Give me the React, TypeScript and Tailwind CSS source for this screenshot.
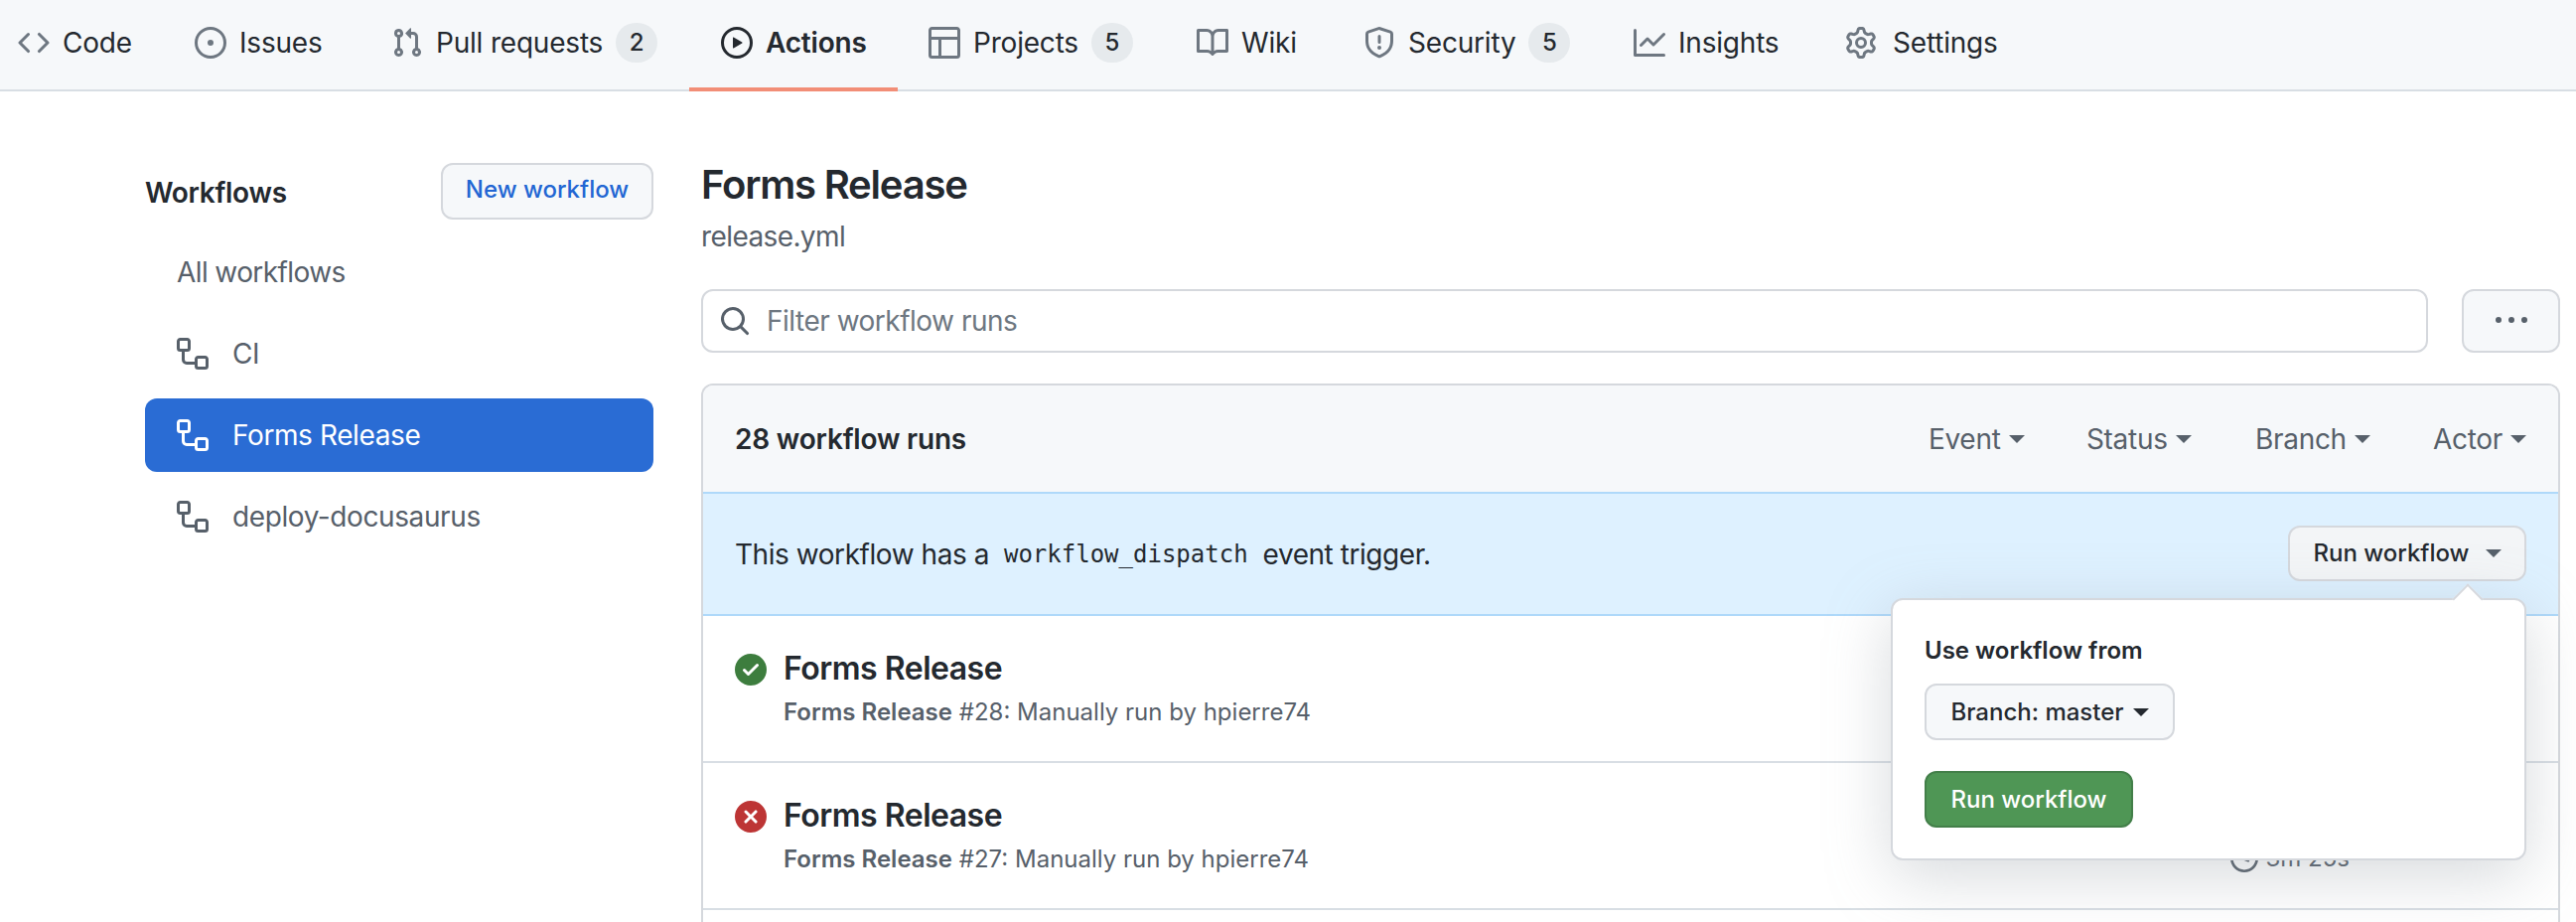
const P = {
  code: 'M4.72 3.22a.75.75 0 011.06 1.06L2.06 8l3.72 3.72a.75.75 0 11-1.06 1.06L.47 8.53a.75.75 0 010-1.06l4.25-4.25zm6.56 0a.75.75 0 10-1.06 1.06L13.94 8l-3.72 3.72a.75.75 0 101.06 1.06l4.25-4.25a.75.75 0 000-1.06l-4.25-4.25z',
  issue: 'M8 9.5a1.5 1.5 0 100-3 1.5 1.5 0 000 3zM8 0a8 8 0 100 16A8 8 0 008 0zM1.5 8a6.5 6.5 0 1113 0 6.5 6.5 0 01-13 0z',
  pull: 'M7.177 3.073L9.573.677A.25.25 0 0110 .854v4.792a.25.25 0 01-.427.177L7.177 3.427a.25.25 0 010-.354zM3.75 2.5a.75.75 0 100 1.5.75.75 0 000-1.5zm-2.25.75a2.25 2.25 0 113 2.122v5.256a2.251 2.251 0 11-1.5 0V5.372A2.25 2.25 0 011.5 3.25zM11 2.5h-1V4h1a1 1 0 011 1v5.628a2.251 2.251 0 101.5 0V5A2.5 2.5 0 0011 2.5zm1 10.25a.75.75 0 111.5 0 .75.75 0 01-1.5 0zM3.75 12a.75.75 0 100 1.5.75.75 0 000-1.5z',
  play: 'M1.5 8a6.5 6.5 0 1113 0 6.5 6.5 0 01-13 0zM8 0a8 8 0 100 16A8 8 0 008 0zM6.379 5.227A.25.25 0 006 5.442v5.117a.25.25 0 00.379.214l4.264-2.559a.25.25 0 000-.428L6.379 5.227z',
  table: 'M0 1.75C0 .784.784 0 1.75 0h12.5C15.216 0 16 .784 16 1.75v12.5A1.75 1.75 0 0114.25 16H1.75A1.75 1.75 0 010 14.25V1.75zM1.5 6.5v7.75c0 .138.112.25.25.25H5v-8H1.5zm5 8h7.75a.25.25 0 00.25-.25V6.5h-8v8zm-5-9.5h13V1.75a.25.25 0 00-.25-.25H1.75a.25.25 0 00-.25.25V5z',
  book: 'M0 1.75A.75.75 0 01.75 1h4.253c1.227 0 2.317.59 3 1.501A3.744 3.744 0 0111.006 1h4.245a.75.75 0 01.75.75v10.5a.75.75 0 01-.75.75h-4.507a2.25 2.25 0 00-1.591.659l-.622.621a.75.75 0 01-1.06 0l-.622-.621A2.25 2.25 0 005.258 13H.75a.75.75 0 01-.75-.75V1.75zm8.755 3a2.25 2.25 0 012.25-2.25H14.5v9h-3.757c-.71 0-1.4.201-1.992.572l.004-7.322zm-1.504 7.324l.004-5.073-.002-2.253A2.25 2.25 0 005.003 2.5H1.5v9h3.757a3.75 3.75 0 011.994.574z',
  shield: 'M7.467.133a1.75 1.75 0 011.066 0l5.25 1.68A1.75 1.75 0 0115 3.48V7c0 1.566-.32 3.182-1.303 4.682-.983 1.498-2.585 2.813-5.032 3.855a1.7 1.7 0 01-1.33 0c-2.447-1.042-4.049-2.357-5.032-3.855C1.32 10.182 1 8.566 1 7V3.48a1.75 1.75 0 011.217-1.667l5.25-1.68zm.61 1.429a.25.25 0 00-.153 0l-5.25 1.68a.25.25 0 00-.174.238V7c0 1.358.275 2.666 1.057 3.86.784 1.194 2.121 2.34 4.366 3.297a.2.2 0 00.154 0c2.245-.956 3.582-2.104 4.366-3.298C13.225 9.666 13.5 8.36 13.5 7V3.48a.25.25 0 00-.174-.237l-5.25-1.68zM9 10.5a1 1 0 11-2 0 1 1 0 012 0zm-.25-5.75a.75.75 0 10-1.5 0v3a.75.75 0 001.5 0v-3z',
  graph: 'M1.5 1.75a.75.75 0 00-1.5 0v12.5c0 .414.336.75.75.75h14.5a.75.75 0 000-1.5H1.5V1.75zm14.28 2.53a.75.75 0 00-1.06-1.06L10 7.94 7.53 5.47a.75.75 0 00-1.06 0L3.22 8.72a.75.75 0 001.06 1.06L7 7.06l2.47 2.47a.75.75 0 001.06 0l5.25-5.25z',
  gear: 'M7.429 1.525a6.593 6.593 0 011.142 0c.036.003.108.036.137.146l.289 1.105c.147.56.55.967.997 1.189.174.086.341.183.501.29.417.278.97.423 1.53.27l1.102-.303c.11-.03.175.016.195.046.219.31.41.641.573.989.014.031.022.11-.059.19l-.815.806c-.411.406-.562.957-.53 1.456a4.588 4.588 0 010 .582c-.032.499.119 1.05.53 1.456l.815.806c.08.08.073.159.059.19a6.494 6.494 0 01-.573.99c-.02.029-.086.074-.195.045l-1.103-.303c-.559-.153-1.112-.008-1.529.27-.16.107-.327.204-.5.29-.449.222-.851.628-.998 1.189l-.289 1.105c-.029.11-.101.143-.137.146a6.613 6.613 0 01-1.142 0c-.036-.003-.108-.037-.137-.146l-.289-1.105c-.147-.56-.55-.967-.997-1.189a4.502 4.502 0 01-.501-.29c-.417-.278-.97-.423-1.53-.27l-1.102.303c-.11.03-.175-.016-.195-.046a6.492 6.492 0 01-.573-.989c-.014-.031-.022-.11.059-.19l.815-.806c.411-.406.562-.957.53-1.456a4.587 4.587 0 010-.582c.032-.499-.119-1.05-.53-1.456l-.815-.806c-.08-.08-.073-.159-.059-.19a6.44 6.44 0 01.573-.99c.02-.029.086-.075.195-.045l1.103.303c.559.153 1.112.008 1.529-.27.16-.107.327-.204.5-.29.449-.222.851-.628.998-1.189l.289-1.105c.029-.11.101-.143.137-.146zM8 0c-.236 0-.47.01-.701.03-.743.065-1.29.615-1.458 1.261l-.29 1.106c-.017.066-.078.158-.211.224a5.994 5.994 0 00-.668.386c-.123.082-.233.09-.3.071L3.27 2.776c-.644-.177-1.392.02-1.82.63a7.977 7.977 0 00-.704 1.217c-.315.675-.111 1.422.363 1.891l.815.806c.05.048.098.147.088.294a6.084 6.084 0 000 .772c.01.147-.038.246-.088.294l-.815.806c-.474.469-.678 1.216-.363 1.891.2.428.436.835.704 1.218.428.609 1.176.806 1.82.63l1.103-.303c.066-.019.176-.011.299.071.213.143.436.272.668.386.133.066.194.158.212.224l.289 1.106c.169.646.715 1.196 1.458 1.26a8.094 8.094 0 001.402 0c.743-.064 1.29-.614 1.458-1.26l.29-1.106c.017-.066.078-.158.211-.224a5.98 5.98 0 00.668-.386c.123-.082.233-.09.3-.071l1.102.302c.644.177 1.392-.02 1.82-.63.268-.382.505-.789.704-1.217.315-.675.111-1.422-.364-1.891l-.814-.806c-.05-.048-.098-.147-.088-.294a6.1 6.1 0 000-.772c-.01-.147.039-.246.088-.294l.814-.806c.475-.469.679-1.216.364-1.891a7.992 7.992 0 00-.704-1.218c-.428-.609-1.176-.806-1.82-.63l-1.103.303c-.066.019-.176.011-.299-.071a5.991 5.991 0 00-.668-.386c-.133-.066-.194-.158-.212-.224L10.16 1.29C9.99.645 9.444.095 8.701.031A8.094 8.094 0 008 0zm1.5 8a1.5 1.5 0 11-3 0 1.5 1.5 0 013 0zM11 8a3 3 0 11-6 0 3 3 0 016 0z',
  workflow: 'M0 1.75C0 .784.784 0 1.75 0h3.5C6.216 0 7 .784 7 1.75v3.5A1.75 1.75 0 015.25 7H4v4a1 1 0 001 1h4v-1.25C9 9.784 9.784 9 10.75 9h3.5c.966 0 1.75.784 1.75 1.75v3.5A1.75 1.75 0 0114.25 16h-3.5A1.75 1.75 0 019 14.25V13.5H5A2.5 2.5 0 012.5 11V7h-.75A1.75 1.75 0 010 5.25v-3.5zm1.75-.25a.25.25 0 00-.25.25v3.5c0 .138.112.25.25.25h3.5a.25.25 0 00.25-.25v-3.5a.25.25 0 00-.25-.25h-3.5zm9 9a.25.25 0 00-.25.25v3.5c0 .138.112.25.25.25h3.5a.25.25 0 00.25-.25v-3.5a.25.25 0 00-.25-.25h-3.5z',
  search: 'M11.5 7a4.499 4.499 0 11-8.998 0A4.499 4.499 0 0111.5 7zm-.82 4.74a6 6 0 111.06-1.06l3.04 3.04a.75.75 0 11-1.06 1.06l-3.04-3.04z',
  kebab: 'M8 9a1.5 1.5 0 100-3 1.5 1.5 0 000 3zM1.5 9a1.5 1.5 0 100-3 1.5 1.5 0 000 3zm13 0a1.5 1.5 0 100-3 1.5 1.5 0 000 3z',
  check: 'M8 16A8 8 0 108 0a8 8 0 000 16zm3.78-9.72a.75.75 0 00-1.06-1.06L6.75 9.19 5.28 7.72a.75.75 0 00-1.06 1.06l2 2a.75.75 0 001.06 0l4.5-4.5z',
  cross: 'M2.343 13.657A8 8 0 1113.657 2.343 8 8 0 012.343 13.657zM6.03 4.97a.75.75 0 00-1.06 1.06L6.94 8 4.97 9.97a.75.75 0 101.06 1.06L8 9.06l1.97 1.97a.75.75 0 101.06-1.06L9.06 8l1.97-1.97a.75.75 0 10-1.06-1.06L8 6.94 6.03 4.97z',
  clock: 'M1.5 8a6.5 6.5 0 1113 0 6.5 6.5 0 01-13 0zM8 0a8 8 0 100 16A8 8 0 008 0zm.5 4.75a.75.75 0 00-1.5 0v3.5a.75.75 0 00.471.696l2.5 1a.75.75 0 00.557-1.392L8.5 7.742V4.75z',
};

function Octicon({ d, className }: { d: string; className: string }) {
  return (
    <svg viewBox="0 0 16 16" fill="currentColor" fillRule="evenodd" className={`shrink-0 ${className}`}>
      <path d={d} />
    </svg>
  );
}

function Caret({ className = 'text-[#57606a]' }: { className?: string }) {
  return <span className={`inline-block w-0 h-0 border-x-[8px] border-x-transparent border-t-[8px] border-t-current ${className}`} />;
}

const tabs = [
  { label: 'Code', icon: P.code, cls: 'ml-[18px] w-[178px]' },
  { label: 'Issues', icon: P.issue, cls: 'w-[198px]' },
  { label: 'Pull requests', icon: P.pull, count: '2', cls: 'w-[300px]' },
  { label: 'Actions', icon: P.play, active: true, cls: 'w-[210px]' },
  { label: 'Projects', icon: P.table, count: '5', cls: 'w-[270px] ml-[31px]' },
  { label: 'Wiki', icon: P.book, cls: 'w-[168px]' },
  { label: 'Security', icon: P.shield, count: '5', cls: 'w-[272px]' },
  { label: 'Insights', icon: P.graph, cls: 'w-[213px]' },
  { label: 'Settings', icon: P.gear, cls: 'gap-[16px]' },
];

function TabBar() {
  return (
    <nav className="h-[92px] bg-[#f6f8fa] border-b-2 border-[#d8dee4] flex items-start">
      {tabs.map((t) => (
        <div
          key={t.label}
          className={`h-[92px] flex items-center gap-[13px] ${t.cls} ${
            t.active ? 'border-b-[4px] border-[#f28e77] pl-[32px] pb-[3px] font-semibold' : 'pb-[7px]'
          }`}
        >
          <Octicon d={t.icon} className={`w-[32px] h-[32px] ${t.active ? 'text-[#24292f]' : 'text-[#6e7781]'}`} />
          <span className="text-[28px] tracking-[-0.2px] text-[#24292f] leading-none">{t.label}</span>
          {t.count && (
            <span className="w-[42px] h-[40px] rounded-full bg-[#e6eaed] flex items-center justify-center text-[24px] font-medium text-[#24292f]">
              {t.count}
            </span>
          )}
        </div>
      ))}
    </nav>
  );
}

function Sidebar() {
  const items = [
    { label: 'CI' },
    { label: 'Forms Release', active: true },
    { label: 'deploy-docusaurus' },
  ];
  return (
    <aside className="w-[512px] shrink-0 ml-[146px] mt-[72px]">
      <div className="flex items-center justify-between h-[56px]">
        <h2 className="text-[28px] tracking-[-0.3px] font-semibold text-[#24292f] mt-[3px]">Workflows</h2>
        <button className="w-[214px] h-[57px] rounded-[12px] border-2 border-[#d5d8dd] bg-[#f6f8fa] text-[24px] font-medium text-[#2266d3] pb-[2px]">
          New workflow
        </button>
      </div>
      <div className="h-[74px] mt-[17px] flex items-center pl-[32px] text-[28px] tracking-[-0.6px] text-[#57606a]">All workflows</div>
      <div className="mt-[8px] flex flex-col gap-[8px]">
        {items.map((it) => (
          <div
            key={it.label}
            className={`h-[74px] rounded-[12px] flex items-center gap-[24px] pl-[32px] text-[28px] tracking-[-0.4px] ${
              it.active ? 'bg-[#2a6cd4] text-white' : 'text-[#57606a]'
            }`}
          >
            <Octicon d={P.workflow} className="w-[32px] h-[32px]" />
            <span>{it.label}</span>
          </div>
        ))}
      </div>
    </aside>
  );
}

function RunRow({ ok, run, dur }: { ok: boolean; run: string; dur?: string }) {
  return (
    <div className="h-[148px] border-b-2 border-[#d8dee4] flex items-start pl-[32px] pr-[130px] pt-[33px]">
      <Octicon d={ok ? P.check : P.cross} className={`w-[32px] h-[32px] mt-[5px] ${ok ? 'text-[#3d7d3e]' : 'text-[#bd3535]'}`} />
      <div className="ml-[17px]">
        <div className="text-[32px] tracking-[-0.5px] leading-[40px] font-semibold text-[#24292f]">Forms Release</div>
        <div className="text-[24px] leading-[30px] mt-[9px] text-[#57606a]">
          <span className="font-semibold">Forms Release</span> {run}: Manually run by hpierre74
        </div>
      </div>
      {dur && (
        <div className="ml-auto mr-[80px] mt-[48px] flex items-center gap-[8px] text-[24px] leading-[30px] text-[#57606a]">
          <Octicon d={P.clock} className="w-[28px] h-[28px]" />
          {dur}
        </div>
      )}
    </div>
  );
}

function RunPopover() {
  return (
    <div className="absolute top-[214px] right-[32px] w-[640px] h-[264px] bg-white rounded-[12px] border-2 border-[#d5d8dd] shadow-[0_16px_64px_rgba(140,149,159,0.35)] px-[32px] pt-[36px]">
      <span className="absolute -top-[12px] right-[46px] w-[22px] h-[22px] rotate-45 bg-white border-l-2 border-t-2 border-[#d5d8dd]" />
      <div className="text-[24px] leading-[30px] font-semibold text-[#24292f]">Use workflow from</div>
      <button className="mt-[18px] w-[252px] h-[57px] rounded-[12px] border-2 border-[#d5d8dd] bg-[#f6f8fa] text-[24px] font-medium text-[#24292f] flex items-center justify-center gap-[9px]">
        Branch: master
        <Caret className="text-[#24292f]" />
      </button>
      <button className="block mt-[31px] w-[210px] h-[57px] rounded-[12px] border-2 border-[#437f49] bg-[#4f9655] text-[24px] font-medium text-white">
        Run workflow
      </button>
    </div>
  );
}

function RunsPanel() {
  const filters = [
    { label: 'Event', cls: 'w-[159px]' },
    { label: 'Status', cls: 'w-[170px]' },
    { label: 'Branch', cls: 'w-[179px]' },
    { label: 'Actor', cls: 'w-auto' },
  ];
  return (
    <div className="relative mt-[31px] rounded-t-[12px] border-x-2 border-t-2 border-[#d5d8dd] bg-white">
      <div className="h-[107px] bg-[#f6f8fa] rounded-t-[10px] flex items-center pl-[32px] pr-[32px]">
        <span className="text-[28px] tracking-[-0.2px] font-semibold text-[#24292f]">28 workflow runs</span>
        <div className="ml-auto flex items-center">
          {filters.map((f) => (
            <div key={f.label} className={`flex items-center gap-[8px] text-[28px] tracking-[-0.3px] text-[#57606a] ${f.cls}`}>
              {f.label}
              <Caret />
            </div>
          ))}
        </div>
      </div>
      <div className="h-[125px] bg-[#def1ff] border-y-2 border-[#afd9fa] flex items-center pl-[32px] pr-[32px] text-[28px] tracking-[-0.45px] text-[#24292f]">
        <span>This workflow has a</span>
        <code className="mx-[15px] text-[24px] tracking-normal font-['DejaVu_Sans_Mono',monospace]">workflow_dispatch</code>
        <span>event trigger.</span>
        <button className="ml-auto w-[240px] h-[56px] rounded-[12px] border-2 border-[#d5d8dd] bg-[#f3f5f7] text-[24px] tracking-normal font-medium flex items-center justify-center gap-[16px] mb-[2px]">
          Run workflow
          <Caret />
        </button>
      </div>
      <RunRow ok run="#28" />
      <RunRow ok={false} run="#27" dur="3m 25s" />
      <div className="h-[12px]" />
      <RunPopover />
    </div>
  );
}

export default function App() {
  return (
    <div className="w-[2594px] h-[928px] overflow-hidden bg-white font-['Inter',sans-serif]">
      <TabBar />
      <div className="flex">
        <Sidebar />
        <main className="ml-[48px] w-[1872px] mt-[72px]">
          <h1 className="text-[40px] tracking-[-1.2px] leading-[44px] font-semibold text-[#24292f]">Forms Release</h1>
          <p className="text-[28px] tracking-[-0.6px] leading-[34px] mt-[13px] text-[#57606a]">release.yml</p>
          <div className="mt-[36px] flex gap-[34px]">
            <div className="flex-1 h-[64px] rounded-[12px] border-2 border-[#d5d8dd] flex items-center gap-[16px] pl-[16px]">
              <Octicon d={P.search} className="w-[32px] h-[32px] text-[#57606a]" />
              <span className="text-[28px] tracking-[-0.5px] text-[#6e7781]">Filter workflow runs</span>
            </div>
            <button className="w-[99px] h-[64px] rounded-[12px] border-2 border-[#d5d8dd] bg-[#f6f8fa] flex items-center justify-center">
              <Octicon d={P.kebab} className="w-[32px] h-[32px] text-[#57606a]" />
            </button>
          </div>
          <RunsPanel />
        </main>
      </div>
    </div>
  );
}
